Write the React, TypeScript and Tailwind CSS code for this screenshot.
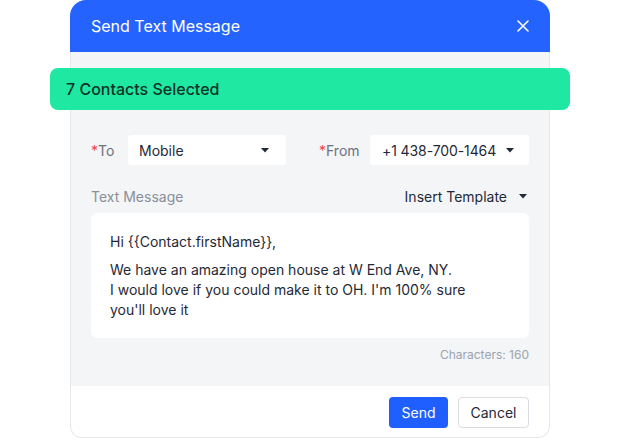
import React from "react";

const Caret = () => (
  <svg width="10" height="6" viewBox="0 0 10 6" className="shrink-0">
    <path d="M1 1 L9 1 L5 5.5 Z" fill="#1f2937" />
  </svg>
);

export default function App() {
  return (
    <div className="w-[620px] h-[440px] bg-white overflow-hidden" style={{ fontFamily: "Inter, 'Noto Sans', sans-serif" }}>
      <div className="ml-[70px] w-[480px] h-[438px] flex flex-col rounded-t-[16px] rounded-b-[12px] border border-[#e5e7eb] border-t-0 bg-white">
        <div className="h-[52px] shrink-0 bg-[#2563ff] rounded-t-[16px] -mx-px flex items-center justify-between pl-[21px] pr-[21px]">
          <span className="text-white text-[16px] leading-none">Send Text Message</span>
          <svg width="12" height="12" viewBox="0 0 12 12">
            <path d="M1 1 L11 11 M11 1 L1 11" stroke="white" strokeWidth="1.6" strokeLinecap="round" />
          </svg>
        </div>
        <div className="bg-[#f3f5f7] h-[334px] shrink-0 flex flex-col px-5 pt-4">
          <div className="-mx-[41px] h-[42px] rounded-[8px] bg-[#1fe8a2] flex items-center pl-4">
            <span className="text-[16px] font-medium text-[#0f3327]">7 Contacts Selected</span>
          </div>
          <div className="mt-[25px] h-[30px] flex items-center justify-between">
            <div className="flex items-center">
              <span className="w-[37px] text-[14px] text-[#6b7280]"><span className="text-[#ef4444]">*</span>To</span>
              <div className="w-[158px] h-[30px] bg-white rounded-[3px] flex items-center justify-between pl-[11px] pr-[16px]">
                <span className="text-[14px] text-[#1f2937]">Mobile</span>
                <Caret />
              </div>
            </div>
            <div className="flex items-center">
              <span className="w-[51px] text-[14px] text-[#6b7280]"><span className="text-[#ef4444]">*</span>From</span>
              <div className="w-[159px] h-[30px] bg-white rounded-[3px] flex items-center justify-between pl-[12px] pr-[14px]">
                <span className="text-[14px] whitespace-nowrap tracking-[-0.1px] text-[#1f2937]">+1 438-700-1464</span>
                <Caret />
              </div>
            </div>
          </div>
          <div className="mt-[21px] h-[20px] flex items-center justify-between">
            <span className="text-[14px] text-[#8a8f98]">Text Message</span>
            <div className="flex items-center gap-[11px] pr-[1px]">
              <span className="text-[14px] text-[#1f2937]">Insert Template</span>
              <Caret />
            </div>
          </div>
          <div className="mt-[7px] h-[125px] bg-white rounded-[6px] pl-[19px] pt-[19px] text-[14px] leading-[20px] text-[#1f2937]">
            <p>Hi {"{{Contact.firstName}}"},</p>
            <p className="mt-[8px]">
              We have an amazing open house at W End Ave, NY.
              <br />I would love if you could make it to OH. I'm 100% sure
              <br />you'll love it
            </p>
          </div>
          <div className="mt-[9px] text-right text-[12px] text-[#9ca3af] leading-[16px]">Characters: 160</div>
        </div>
        <div className="flex-1 flex items-start justify-end gap-[10px] pt-[11px] pr-[20px]">
          <button className="w-[59px] h-[31px] rounded-[4px] bg-[#1f5eff] text-white text-[14px]">Send</button>
          <button className="w-[71px] h-[31px] rounded-[4px] bg-white border border-[#d9dce1] text-[#1f2937] text-[14px]">Cancel</button>
        </div>
      </div>
    </div>
  );
}
